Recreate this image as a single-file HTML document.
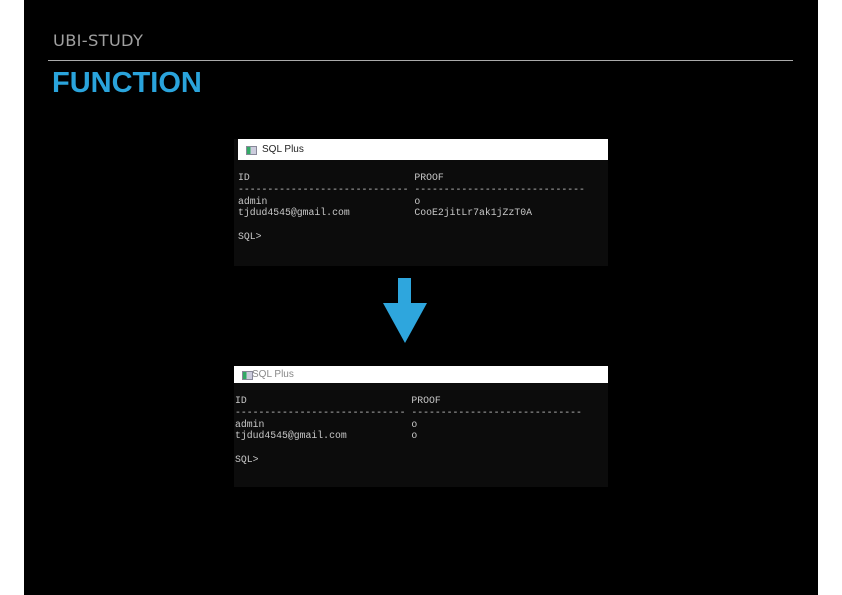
<!DOCTYPE html>
<html><head><style>
body{margin:0;width:842px;height:595px;background:#fff;position:relative;overflow:hidden;font-family:"DejaVu Sans","Liberation Sans",sans-serif}
.slide{position:absolute;left:24px;top:0;width:794px;height:595px;background:#000}
.t1{position:absolute;left:53px;top:31px;color:#a0a0a0;font-size:16.3px;letter-spacing:0.3px}
.line{position:absolute;left:48px;top:60px;width:745px;height:1px;background:#aaa}
.t2{position:absolute;left:52px;top:67px;color:#2aa4dc;font-family:"Liberation Sans",sans-serif;font-size:29px;font-weight:bold}
.win{position:absolute;background:#0c0c0c;color:#c8c8c8;font-family:"Liberation Mono",monospace;font-size:9.8px;line-height:11.8px}
.bar{background:#fff;color:#222;font-family:"Liberation Sans",sans-serif;font-size:10px;padding-left:24px;position:relative}
.bar:before{content:"";position:absolute;left:8px;top:50%;margin-top:-4px;width:9px;height:7px;border:1px solid #889;background:linear-gradient(90deg,#3a6 0 40%,#ccd 40%)}
.txt{position:absolute;white-space:pre}
</style></head><body>
<div class="slide"></div>
<div class="t1">UBI-STUDY</div>
<div class="line"></div>
<div class="t2">FUNCTION</div>

<div class="win" style="left:234px;top:139px;width:374px;height:127px">
<div class="bar" style="height:21px;line-height:21px;margin-left:4px">SQL Plus</div>
<div class="txt" style="left:4px;top:33px">ID                            PROOF
----------------------------- -----------------------------
admin                         o
tjdud4545@gmail.com           CooE2jitLr7ak1jZzT0A

SQL&gt;</div>
</div>

<svg style="position:absolute;left:380px;top:276px" width="50" height="70"><polygon points="18,2 31,2 31,27 47,27 25,67 3,27 18,27" fill="#2ea6dd"/></svg>

<div class="win" style="left:234px;top:366px;width:374px;height:121px">
<div class="bar" style="height:17px;line-height:17px;color:#888;padding-left:18px">SQL Plus</div>
<div class="txt" style="left:1px;top:29px">ID                            PROOF
----------------------------- -----------------------------
admin                         o
tjdud4545@gmail.com           o

SQL&gt;</div>
</div>
</body></html>
